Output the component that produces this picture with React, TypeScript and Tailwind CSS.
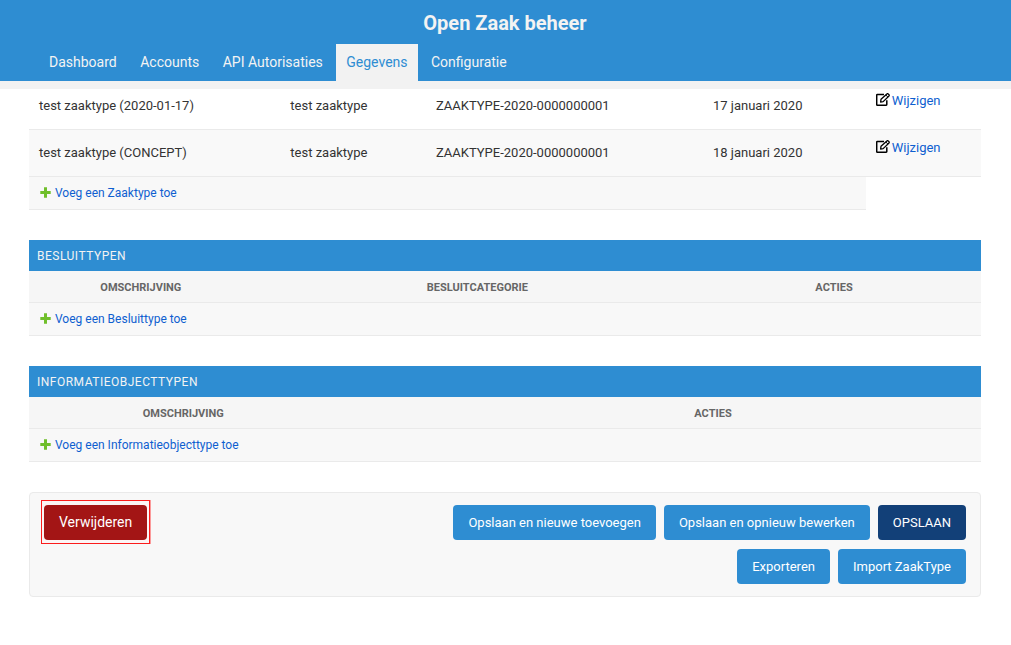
import type { ReactNode } from "react";

const navItems = ["Dashboard", "Accounts", "API Autorisaties", "Gegevens", "Configuratie"];
const activeItem = "Gegevens";

const zaaktypen = [
  { name: "test zaaktype (2020-01-17)", description: "test zaaktype", identification: "ZAAKTYPE-2020-0000000001", date: "17 januari 2020" },
  { name: "test zaaktype (CONCEPT)", description: "test zaaktype", identification: "ZAAKTYPE-2020-0000000001", date: "18 januari 2020" },
];

function PlusIcon() {
  return (
    <svg viewBox="0 0 11 12" className="h-3 w-[11px] shrink-0" aria-hidden="true">
      <path d="M4 .3h3V4h3.7v3H7v3.7H4V7H.3V4H4z" fill="#70bf2b" />
    </svg>
  );
}

function EditIcon() {
  return (
    <svg viewBox="0 0 14 13" className="h-[13px] w-[14px] shrink-0" fill="none" stroke="#000" aria-hidden="true">
      <path d="M8 1.6H1.3a.6.6 0 0 0-.6.6v9.4a.6.6 0 0 0 .6.6h8.9a.6.6 0 0 0 .6-.6V7.2" strokeWidth="1.5" />
      <path d="M4.6 9l.4-2.7L10.9.9a1 1 0 0 1 1.3 0l.8.8a.9.9 0 0 1 0 1.3L7.2 8.6z" strokeWidth="1.3" strokeLinejoin="round" />
      <path d="M9.8 2l2.1 2" strokeWidth="1" />
    </svg>
  );
}

function AddRow({ label, span }: { label: string; span: number }) {
  return (
    <tr>
      <td colSpan={span} className="h-[33px] border-b border-[#eaeaea] bg-[#f8f8f8] pl-[11px] text-xs">
        <a href="#" className="flex items-start gap-1 text-[#0f5fd0]">
          <span className="pt-[2px]">
            <PlusIcon />
          </span>
          {label}
        </a>
      </td>
    </tr>
  );
}

function HeadCell({ children }: { children?: ReactNode }) {
  return (
    <th className="h-8 border-b border-[#eaeaea] bg-[#f6f6f6] pt-[3px] text-[11px] font-bold text-[#666] uppercase">{children}</th>
  );
}

function SectionTitle({ children }: { children: ReactNode }) {
  return <h2 className="bg-[#2e8dd2] px-2 pt-px text-xs leading-[30px] tracking-[0.5px] text-[#f3f3f3] uppercase">{children}</h2>;
}

function Button({ children, dark = false }: { children: ReactNode; dark?: boolean }) {
  return (
    <button
      type="button"
      className={
        dark
          ? "h-[35px] rounded bg-[#124078] px-[15px] text-[13px] text-white"
          : "h-[35px] rounded bg-[#2e8dd2] px-[15px] text-[13px] text-white"
      }
    >
      {children}
    </button>
  );
}

export default function App() {
  return (
    <div className="min-h-screen bg-white font-['Roboto',sans-serif] text-[13px] text-[#333]">
      <header className="sticky top-0 z-10 border-b-8 border-[#f2f2f2] bg-[#2e8dd2]">
        <h1 className="pt-[3px] pr-px pb-px text-center text-xl leading-10 font-bold text-[#f3f3f3]">Open Zaak beheer</h1>
        <nav className="px-[39px] text-sm leading-[37px]">
          {navItems.map((item) => (
            <span key={item}>
              <a
                href="#"
                aria-current={item === activeItem ? "page" : undefined}
                className={
                  item === activeItem
                    ? "inline-block bg-[#f2f2f2] px-[10px] align-top text-[#2e8dd2]"
                    : "inline-block px-[10px] align-top text-[#f3f3f3]"
                }
              >
                {item}
              </a>{" "}
            </span>
          ))}
        </nav>
      </header>

      <main className="-mt-[6px] flex flex-col gap-[30px] pr-[30px] pl-[29px]">
        <table className="w-full table-fixed border-separate border-spacing-0">
          <colgroup>
            <col className="w-[26.4%]" />
            <col className="w-[15.3%]" />
            <col className="w-[29.1%]" />
            <col className="w-[17.1%]" />
            <col />
          </colgroup>
          <tbody>
            {zaaktypen.map((row) => (
              <tr key={row.name} className="even:bg-[#f9f9f9] [&>td]:h-[47px] [&>td]:border-b [&>td]:border-[#eaeaea] [&>td]:px-[10px]">
                <td>{row.name}</td>
                <td>{row.description}</td>
                <td>{row.identification}</td>
                <td>{row.date}</td>
                <td className="pt-2 align-top">
                  <a href="#" className="flex items-start gap-[2px] text-[#0f5fd0]">
                    <span className="pt-[2px]">
                      <EditIcon />
                    </span>
                    Wijzigen
                  </a>
                </td>
              </tr>
            ))}
            <AddRow label="Voeg een Zaaktype toe" span={4} />
          </tbody>
        </table>

        <section>
          <SectionTitle>Besluittypen</SectionTitle>
          <table className="w-full table-fixed border-separate border-spacing-0">
            <colgroup>
              <col className="w-[23.5%]" />
              <col className="w-[47.2%]" />
              <col />
              <col className="w-[15px]" />
            </colgroup>
            <thead>
              <tr>
                <HeadCell>Omschrijving</HeadCell>
                <HeadCell>Besluitcategorie</HeadCell>
                <HeadCell>Acties</HeadCell>
                <HeadCell />
              </tr>
            </thead>
            <tbody>
              <AddRow label="Voeg een Besluittype toe" span={4} />
            </tbody>
          </table>
        </section>

        <section>
          <SectionTitle>Informatieobjecttypen</SectionTitle>
          <table className="w-full table-fixed border-separate border-spacing-0">
            <colgroup>
              <col className="w-[32.4%]" />
              <col className="w-[11.3%]" />
              <col />
            </colgroup>
            <thead>
              <tr>
                <HeadCell>Omschrijving</HeadCell>
                <HeadCell />
                <HeadCell>Acties</HeadCell>
              </tr>
            </thead>
            <tbody>
              <AddRow label="Voeg een Informatieobjecttype toe" span={3} />
            </tbody>
          </table>
        </section>

        <div className="flex items-start justify-between rounded border border-[#eaeaea] bg-[#f8f8f8] pt-[7px] pr-[14px] pb-3 pl-[11px]">
          <div className="flex border border-[#fb1c1c] bg-[#fbf5f5] px-[2px] pt-1 pb-[3px] shadow-[1px_0_0_#fb9a9a]">
            <button type="button" className="h-[35px] rounded bg-[#a31515] px-[15px] pb-[2px] text-sm text-white">
              Verwijderen
            </button>
          </div>
          <div className="flex flex-col items-end gap-[9px] pt-[5px]">
            <div className="flex gap-2">
              <Button>Opslaan en nieuwe toevoegen</Button>
              <Button>Opslaan en opnieuw bewerken</Button>
              <Button dark>OPSLAAN</Button>
            </div>
            <div className="flex gap-2">
              <Button>Exporteren</Button>
              <Button>Import ZaakType</Button>
            </div>
          </div>
        </div>
      </main>
    </div>
  );
}
